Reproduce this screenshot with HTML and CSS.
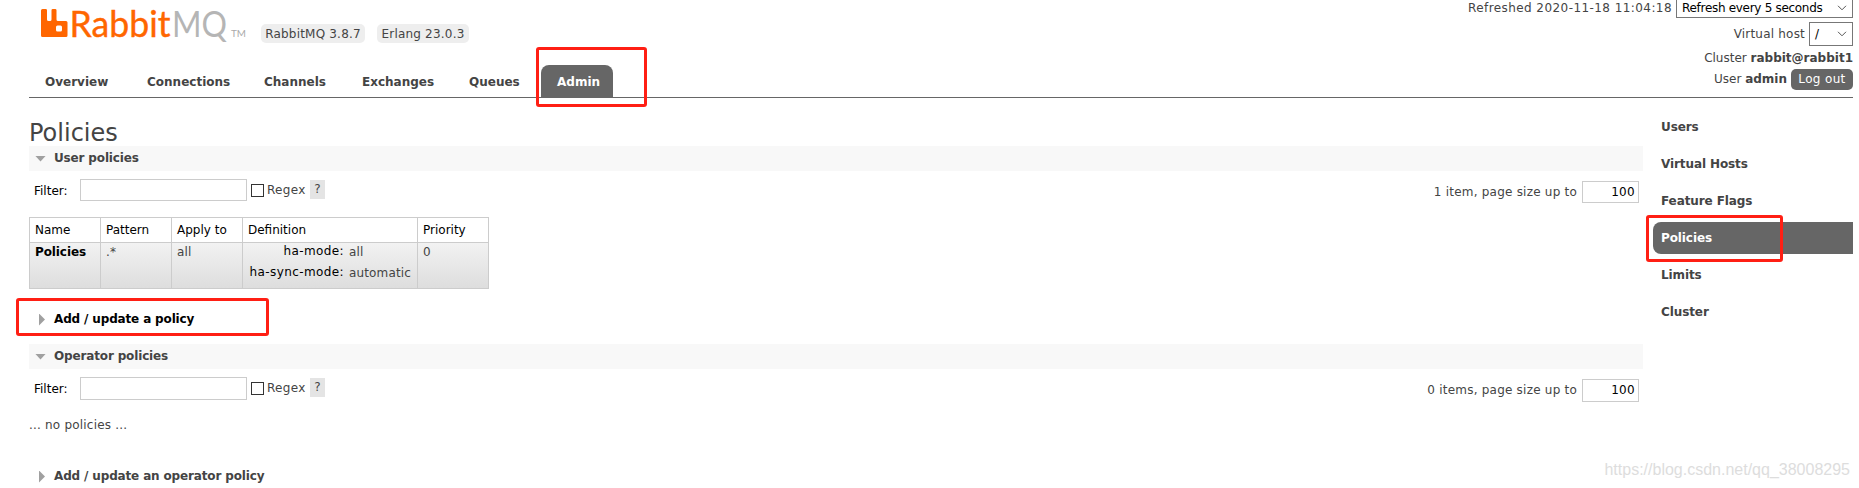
FILE: index.html
```html
<!DOCTYPE html>
<html lang="en">
<head>
<meta charset="utf-8">
<title>RabbitMQ Management</title>
<link rel="stylesheet" href="styles.css">
</head>
<body>
<header class="header">
  <div class="brand">
    <svg class="logo" width="212" height="50" viewBox="0 -5 212 50">
      <path fill="#f60" fill-rule="evenodd" d="M1.5 4h3.200q1.300 0 1.300 1.300v9.200q0 1.500 1.500 1.500h1.500q1.500 0 1.500-1.500V5.300q0-1.300 1.300-1.300h2.400q1.300 0 1.300 1.300v9.200q0 1.500 1.500 1.500h8q1.500 0 1.500 1.500v13q0 1.500-1.500 1.500H1.500q-1.500 0-1.500-1.500V5.500Q0 4 1.500 4zM16.500 20.500q-1.500 0-1.500 1.500v3q0 1.500 1.500 1.500h3q1.500 0 1.500-1.500v-3q0-1.500-1.500-1.500z"/>
      <text class="word orange" x="28.500" y="32" textLength="101" lengthAdjust="spacingAndGlyphs">Rabbit</text>
      <text class="word gray" x="131" y="32" textLength="55" lengthAdjust="spacingAndGlyphs">MQ</text>
      <text class="tm" x="190" y="32" textLength="15" lengthAdjust="spacingAndGlyphs">TM</text>
    </svg>
    <span class="version v1">RabbitMQ 3.8.7</span>
    <span class="version v2">Erlang 23.0.3</span>
  </div>
  <nav class="tabs">
    <a class="tab t1">Overview</a><a class="tab t2">Connections</a><a class="tab t3">Channels</a><a class="tab t4">Exchanges</a><a class="tab t5">Queues</a><a class="tab t6 selected">Admin</a>
  </nav>
  <div class="status">
    <div class="line l1"><span class="refreshed">Refreshed 2020-11-18 11:04:18</span><span class="select refresh">Refresh every 5 seconds<svg width="10" height="6" viewBox="0 0 10 6"><path d="M1 .8l4 4 4-4" fill="none" stroke="#555"/></svg></span></div>
    <div class="line l2"><span class="vlabel">Virtual host</span><span class="select vhost">/<svg width="10" height="6" viewBox="0 0 10 6"><path d="M1 .8l4 4 4-4" fill="none" stroke="#555"/></svg></span></div>
    <div class="line l3"><span>Cluster <b>rabbit@rabbit1</b></span></div>
    <div class="line l4"><span>User <b>admin</b></span><span class="logout">Log out</span></div>
  </div>
</header>
<div class="body">
  <main class="main">
    <h1>Policies</h1>
    <h2 class="bar"><i class="down"></i>User policies</h2>
    <div class="filter">
      <label>Filter:</label><span class="input"></span><span class="check"></span><span class="regex">Regex</span><span class="help">?</span>
      <span class="pager">1 item, page size up to</span><span class="size">100</span>
    </div>
    <table class="list">
      <tr class="head"><th>Name</th><th>Pattern</th><th>Apply to</th><th class="def">Definition</th><th>Priority</th></tr>
      <tr class="row"><td><b>Policies</b></td><td>.*</td><td>all</td><td><div class="facts"><span class="key">ha-mode:</span><span>all</span><span class="key">ha-sync-mode:</span><span>automatic</span></div></td><td>0</td></tr>
    </table>
    <h2 class="closed hover"><i class="right"></i>Add / update a policy</h2>
    <h2 class="bar"><i class="down"></i>Operator policies</h2>
    <div class="filter second">
      <label>Filter:</label><span class="input"></span><span class="check"></span><span class="regex">Regex</span><span class="help">?</span>
      <span class="pager">0 items, page size up to</span><span class="size">100</span>
    </div>
    <p class="none">... no policies ...</p>
    <h2 class="closed"><i class="right"></i>Add / update an operator policy</h2>
  </main>
  <nav class="side">
    <a>Users</a><a>Virtual Hosts</a><a>Feature Flags</a><a class="selected">Policies</a><a>Limits</a><a>Cluster</a>
  </nav>
</div>
<div class="mark mark-tab"></div>
<div class="mark mark-side"></div>
<div class="mark mark-add"></div>
<div class="watermark">https://blog.csdn.net/qq_38008295</div>
</body>
</html>
```
FILE: styles.css
```css
* { box-sizing: border-box; }
body {
  margin: 0;
  width: 1859px;
  height: 488px;
  overflow: hidden;
  position: relative;
  background: #fff;
  color: #444;
  font: 12px/16px Verdana, "DejaVu Sans", sans-serif;
  white-space: nowrap;
}
.header {
  height: 98px;
  margin: 0 6px 0 29px;
  border-bottom: 1px solid #666;
  display: grid;
  grid-template-columns: 1fr 400px;
  grid-template-rows: 65px 32px;
}
.brand { display: flex; align-items: flex-start; padding: 0 0 0 12px; }
.logo { margin-right: 8px; overflow: visible; }
.word { font-family: Lato, sans-serif; font-size: 37px; }
.orange { fill: #f60; stroke: #f60; stroke-width: .4px; }
.gray { fill: #b5b5b5; }
.tm { font: 9px Lato, sans-serif; fill: #aaa; }
.version {
  margin-top: 24px;
  height: 19px;
  line-height: 20px;
  border-radius: 5px;
  background: #eee;
  text-align: center;
  letter-spacing: .2px;
}
.v1 { width: 104px; margin-right: 12px; }
.v2 { width: 92px; }
.tabs { grid-row: 2; display: flex; gap: 5px; }
.tab {
  padding: 0 0 0 16px;
  height: 32px;
  line-height: 34px;
  font-weight: bold;
}
.t1 { width: 97px; }
.t2 { width: 112px; }
.t3 { width: 93px; }
.t4 { width: 102px; }
.t5 { width: 83px; }
.t6 { width: 72px; }
.tab.selected { background: #666; color: #fff; border-radius: 8px 8px 0 0; }
.status { grid-column: 2; grid-row: 1 / 3; }
.line { display: flex; justify-content: flex-end; align-items: center; gap: 4px; }
.l1 { height: 24px; margin-top: -6px; line-height: 30px; }
.l2 { height: 24px; margin-top: 4px; line-height: 18px; }
.l3 { height: 22px; line-height: 18px; padding-top: 1px; }
.l4 { height: 22px; line-height: 18px; }
.refreshed { letter-spacing: .43px; padding-top: 3px; }
.vlabel { letter-spacing: .2px; }
.select {
  height: 24px;
  line-height: 24px;
  border: 1px solid #777;
  padding: 0 5px;
  color: #000;
  display: flex;
  align-items: center;
  justify-content: space-between;
}
.refresh { width: 177px; letter-spacing: -.3px; padding-top: 3px; }
.vhost { width: 44px; }
.logout {
  width: 62px;
  height: 21px;
  line-height: 21px;
  border-radius: 5px;
  background: #666;
  color: #fff;
  text-align: center;
  letter-spacing: .35px;
}
.body { display: flex; }
.main { width: 1614px; margin-left: 29px; }
h1 { margin: 22px 0 0; height: 26px; font: 24px/27px Verdana, "DejaVu Sans", sans-serif; }
h2 {
  margin: 0;
  height: 25px;
  font-size: 12px;
  line-height: 25px;
  letter-spacing: -.15px;
  display: flex;
  align-items: center;
}
.bar { background: #f8f8f8; padding-left: 6px; }
.down { width: 11px; height: 6px; margin-right: 8px; background: #a0a0a0; clip-path: polygon(0 0, 100% 0, 50% 100%); }
.right { width: 6px; height: 12px; margin-right: 9px; background: #a0a0a0; clip-path: polygon(0 0, 100% 50%, 0 100%); }
.closed { padding-left: 10px; }
.hover { color: #000; margin: 18px 0 12px; }
.filter {
  display: flex;
  height: 46px;
  padding: 8px 4px 0 5px;
  align-items: flex-start;
}
.filter label { width: 46px; color: #000; line-height: 24px; }
.input { width: 167px; height: 22px; border: 1px solid #ccc; }
.check { width: 13px; height: 13px; margin: 5px 3px 0 4px; border: 1px solid #333; }
.regex { line-height: 22px; width: 43px; letter-spacing: .3px; }
.help { width: 15px; height: 19px; line-height: 19px; margin-top: 1px; background: #e4e4e4; text-align: center; }
.pager { margin: 2px 5px 0 auto; line-height: 22px; letter-spacing: .22px; }
.size {
  width: 57px;
  height: 22px;
  margin-top: 2px;
  border: 1px solid #ccc;
  padding-right: 3px;
  color: #000;
  text-align: right;
  line-height: 21px;
  letter-spacing: .3px;
}
.second { height: 44px; }
.second .input, .second .size { height: 23px; }
.list { width: 460px; border-collapse: collapse; table-layout: fixed; }
.list th, .list td { border: 1px solid #ccc; padding: 0 5px; text-align: left; vertical-align: top; }
.list th { width: 71px; height: 24px; font-weight: normal; color: #000; line-height: 24px; }
.list th.def { width: 175px; }
.list td { height: 46px; line-height: 18px; letter-spacing: .1px; }
.list td b { color: #000; letter-spacing: -.1px; }
.row { background: linear-gradient(#f2f2f2, #ddd); }
.facts { display: grid; grid-template-columns: 96px 1fr; column-gap: 5px; row-gap: 3px; letter-spacing: .15px; }
.key { color: #000; text-align: right; position: relative; top: -1px; letter-spacing: .4px; }
.none { margin: 4px 0 31px; height: 16px; letter-spacing: .2px; }
.side { width: 200px; margin: 13px 0 0 10px; display: flex; flex-direction: column; gap: 5px; }
.side a { height: 32px; line-height: 32px; padding-left: 8px; font-weight: bold; letter-spacing: -.1px; }
.side .selected { background: #666; color: #fff; border-radius: 8px 0 0 8px; }
.mark { position: absolute; border: 3px solid #ff1f14; border-radius: 3px; }
.mark-tab { left: 536px; top: 47px; width: 111px; height: 60px; }
.mark-side { left: 1646px; top: 215px; width: 137px; height: 47px; }
.mark-add { left: 16px; top: 298px; width: 253px; height: 38px; }
.watermark { position: absolute; right: 9px; bottom: 8px; font: 16px/20px "Liberation Sans", sans-serif; color: #ddd; }
```
